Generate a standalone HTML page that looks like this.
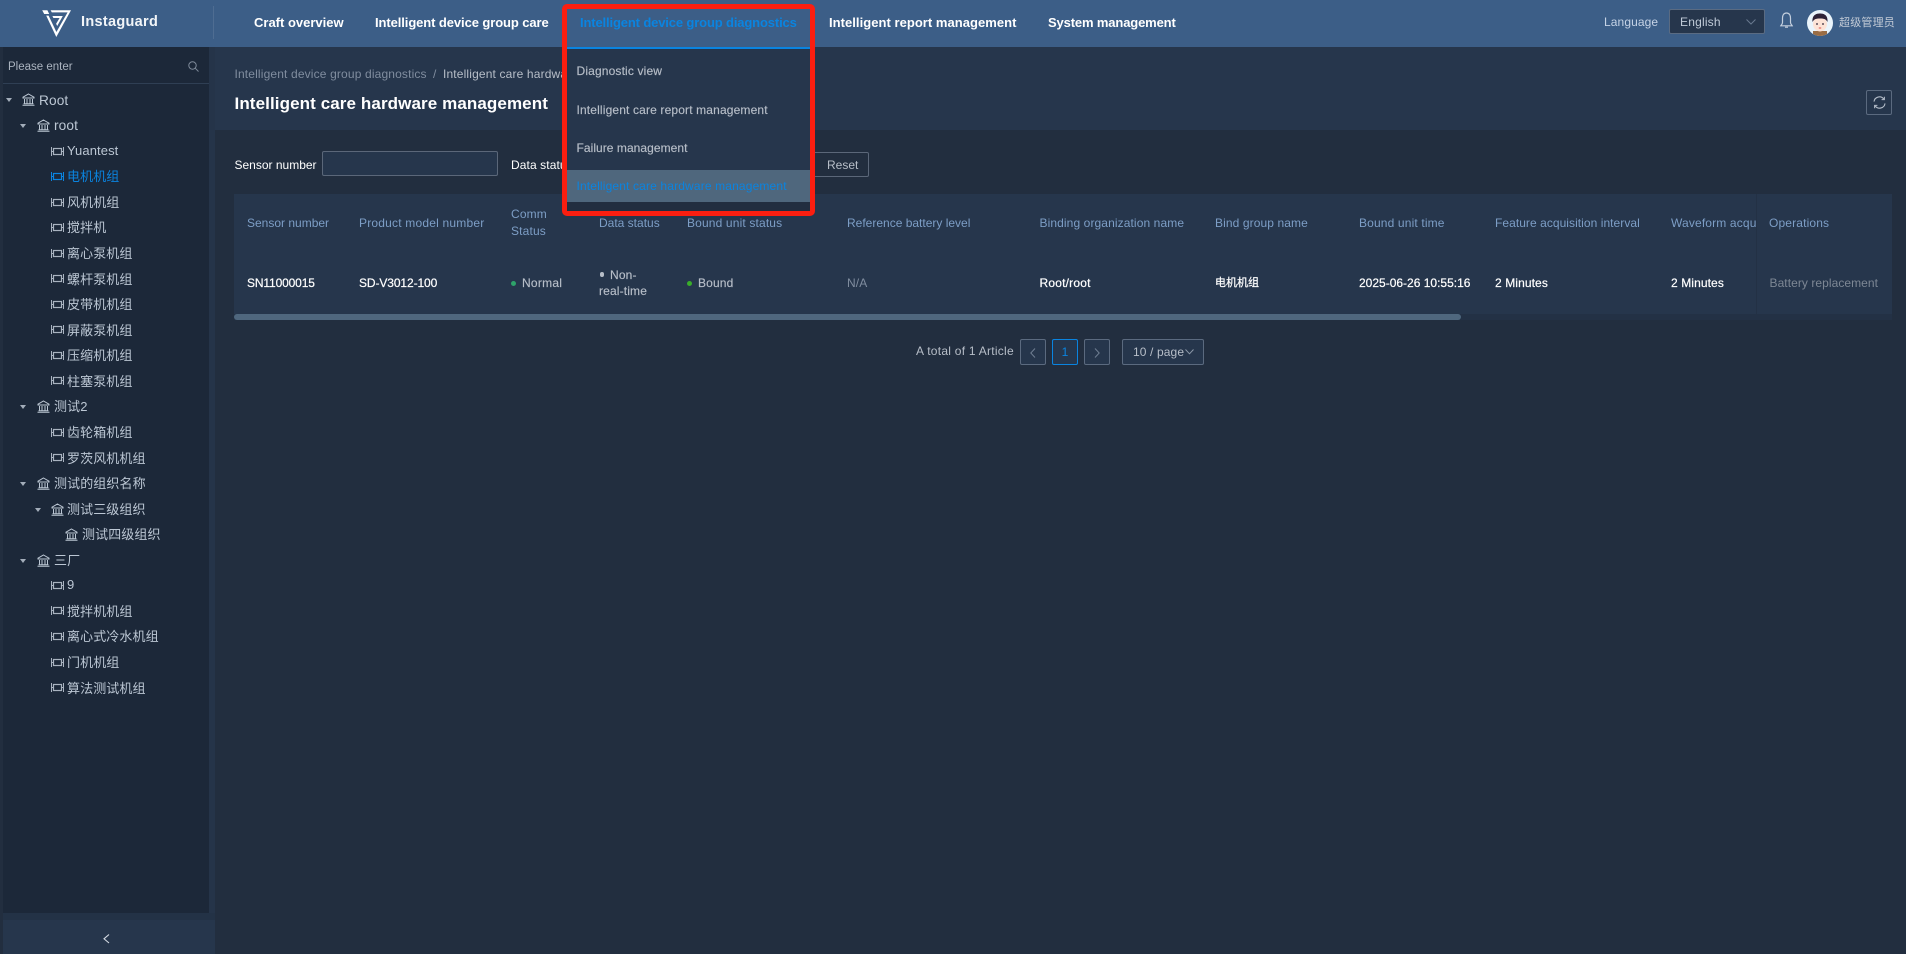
<!DOCTYPE html>
<html lang="en"><head><meta charset="utf-8"><title>Instaguard</title>
<style>
html,body{margin:0;padding:0;width:1906px;height:954px;overflow:hidden;background:#222e3f}
body{position:relative;font-family:"Liberation Sans","Noto Sans CJK SC",sans-serif;font-size:12px;color:#fff}
.b{position:absolute;box-sizing:border-box}
.t{position:absolute;white-space:nowrap;line-height:20px;height:20px}
.n{font-weight:700;font-size:13px;color:#fff}
.th{color:#7d9ec6}
.td{color:#fff;letter-spacing:.1px;-webkit-text-stroke:.2px #fff}
.tr{font-size:13px;color:#bcc7d4;letter-spacing:.1px}
.m{font-size:12px;color:#b7bec8;letter-spacing:.15px;-webkit-text-stroke:.15px currentColor}
svg{position:absolute;overflow:visible}
</style></head><body>
<svg width="0" height="0" style="position:absolute"><defs>
<symbol id="bank" viewBox="0 0 13 13" overflow="visible"><path d="M6.5 1 L12 4.2 V5 H1 V4.2 Z M2.5 6V10.5 M5 6V10.5 M8 6V10.5 M10.5 6V10.5 M1.5 10.7H11.5 M.5 12.3H12.5" fill="none" stroke="currentColor" stroke-width="1"/></symbol>
<symbol id="dev" viewBox="0 0 13 9" overflow="visible"><path d="M.5 0V9 M12.5 0V9 M.5 4.5H2.5 M10.5 4.5H12.5" fill="none" stroke="currentColor" stroke-width="1"/><rect x="2.5" y="1.5" width="8" height="6" fill="none" stroke="currentColor" stroke-width="1.2"/></symbol>
<symbol id="car" viewBox="0 0 6 4"><path d="M0 0H6L3 4Z" fill="#a3adba"/></symbol>
</defs></svg>

<!-- header -->
<div class="b" style="left:0;top:0;width:1906px;height:47px;background:#3c5e87"></div>
<svg style="left:42px;top:10px" width="29" height="27" viewBox="0 0 29 27"><path d="M4.2 5.6 L6.6 5.6 L14.4 22 L25.6 2.4 H9.8 L8.6 .3 H29 L14.3 27 Z" fill="#fff"/><path d="M.2 .3 H5.4 L7.2 4 H2.2 Z" fill="#fff"/><path d="M10.4 6 H20.8 L15.2 16 L14.1 13.8 L17.6 8 H11.4 Z" fill="#fff"/></svg>
<div class="t" style="left:81px;top:12px;font-weight:700;font-size:14.5px;color:#f2f5f8;letter-spacing:.3px">Instaguard</div>
<div class="b" style="left:213px;top:6px;width:1px;height:33px;background:#4f6d92"></div>
<div class="t n" style="left:254px;top:13px">Craft overview</div>
<div class="t n" style="left:375px;top:13px;letter-spacing:-.09px">Intelligent device group care</div>
<div class="t n" style="left:580px;top:13px;color:#0a84e0;letter-spacing:-.14px">Intelligent device group diagnostics</div>
<div class="t n" style="left:829px;top:13px;letter-spacing:.04px">Intelligent report management</div>
<div class="t n" style="left:1048px;top:13px;letter-spacing:-.14px">System management</div>
<div class="t" style="left:1604px;top:12px;color:#c6d3e6;letter-spacing:.1px">Language</div>
<div class="b" style="left:1669px;top:9px;width:96px;height:25px;background:#26364c;border:1px solid #5a6b82;border-radius:2px"></div>
<div class="t" style="left:1680px;top:12px;color:#c0cbd8;letter-spacing:.2px">English</div>
<svg style="left:1746px;top:19px" width="10" height="6"><path d="M.5 .5 L5 5 L9.5 .5" fill="none" stroke="#68798f" stroke-width="1"/></svg>
<svg style="left:1780px;top:12px" width="13" height="17" viewBox="0 0 13 17"><path d="M6.5 1 C3.5 1 2.5 3.5 2.5 6 V10.5 C2.5 12 1.2 13 .8 13.8 H12.2 C11.8 13 10.5 12 10.5 10.5 V6 C10.5 3.5 9.5 1 6.5 1 Z M5 15.2 H8" fill="none" stroke="#c3cfde" stroke-width="1.2"/></svg>
<svg style="left:1807px;top:10px" width="26" height="26" viewBox="0 0 26 26"><clipPath id="av"><circle cx="13" cy="13" r="13"/></clipPath><g clip-path="url(#av)"><rect width="26" height="26" fill="#eaf4fb"/><rect x="6" y="21" width="14" height="5" fill="#9a6d45"/><ellipse cx="13" cy="14" rx="7" ry="7.5" fill="#fde3d6"/><path d="M5.5 12 C5 5 9 3.5 13 3.5 C17 3.5 21 5 20.5 12 C19 9 17 8.5 13 8.5 C9 8.5 7 9 5.5 12Z" fill="#2e2236"/><circle cx="10" cy="14" r=".9" fill="#2e2236"/><circle cx="16" cy="14" r=".9" fill="#2e2236"/><path d="M11.8 18H14.2" stroke="#d9534f"/></g></svg>
<div class="t" style="left:1839px;top:13px;font-size:11px;color:#c3cbd6;letter-spacing:.2px">超级管理员</div>

<!-- sidebar -->
<div class="b" style="left:3px;top:47px;width:206px;height:866px;background:#1c2839"></div>
<div class="b" style="left:209px;top:47px;width:6px;height:873px;background:#253449"></div>
<div class="b" style="left:3px;top:83px;width:206px;height:1px;background:#2f3f54"></div>
<div class="t" style="left:8px;top:57px;color:#aab3bf;font-size:11.5px">Please enter</div>
<svg style="left:188px;top:61px" width="11" height="11"><circle cx="4.5" cy="4.5" r="3.7" fill="none" stroke="#7e8a99"/><path d="M7.3 7.3L10.5 10.5" stroke="#7e8a99"/></svg>
<div class="b" style="left:3px;top:913px;width:212px;height:7px;background:#233246"></div>
<div class="b" style="left:3px;top:920px;width:212px;height:34px;background:#26364c"></div>
<svg style="left:103px;top:934px" width="7" height="10"><path d="M6 .5 L1 4.8 L6 9" fill="none" stroke="#d5dbe3" stroke-width="1.1"/></svg>

<!-- tree -->
<svg style="left:6px;top:98px;color:#bcc7d4" width="6" height="4"><use href="#car"/></svg><svg style="left:22px;top:93px;color:#bcc7d4" width="13" height="13"><use href="#bank"/></svg><div class="t tr" style="left:39px;top:91px;font-size:13.7px">Root</div>
<svg style="left:20px;top:124px" width="6" height="4"><use href="#car"/></svg><svg style="left:37px;top:119px;color:#bcc7d4" width="13" height="13"><use href="#bank"/></svg><div class="t tr" style="left:54px;top:116px;font-size:13.7px">root</div>
<svg style="left:51px;top:147px;color:#a9b3c0" width="13" height="9"><use href="#dev"/></svg><div class="t tr" style="left:67px;top:141px">Yuantest</div>
<svg style="left:51px;top:172px;color:#0a84e0" width="13" height="9"><use href="#dev"/></svg><div class="t tr" style="left:67px;top:167px;color:#0a84e0">电机机组</div>
<svg style="left:51px;top:198px;color:#a9b3c0" width="13" height="9"><use href="#dev"/></svg><div class="t tr" style="left:67px;top:193px">风机机组</div>
<svg style="left:51px;top:223px;color:#a9b3c0" width="13" height="9"><use href="#dev"/></svg><div class="t tr" style="left:67px;top:218px">搅拌机</div>
<svg style="left:51px;top:249px;color:#a9b3c0" width="13" height="9"><use href="#dev"/></svg><div class="t tr" style="left:67px;top:244px">离心泵机组</div>
<svg style="left:51px;top:274px;color:#a9b3c0" width="13" height="9"><use href="#dev"/></svg><div class="t tr" style="left:67px;top:270px">螺杆泵机组</div>
<svg style="left:51px;top:300px;color:#a9b3c0" width="13" height="9"><use href="#dev"/></svg><div class="t tr" style="left:67px;top:295px">皮带机机组</div>
<svg style="left:51px;top:325px;color:#a9b3c0" width="13" height="9"><use href="#dev"/></svg><div class="t tr" style="left:67px;top:321px">屏蔽泵机组</div>
<svg style="left:51px;top:351px;color:#a9b3c0" width="13" height="9"><use href="#dev"/></svg><div class="t tr" style="left:67px;top:346px">压缩机机组</div>
<svg style="left:51px;top:376px;color:#a9b3c0" width="13" height="9"><use href="#dev"/></svg><div class="t tr" style="left:67px;top:372px">柱塞泵机组</div>
<svg style="left:20px;top:405px" width="6" height="4"><use href="#car"/></svg><svg style="left:37px;top:400px;color:#bcc7d4" width="13" height="13"><use href="#bank"/></svg><div class="t tr" style="left:54px;top:397px">测试2</div>
<svg style="left:51px;top:428px;color:#a9b3c0" width="13" height="9"><use href="#dev"/></svg><div class="t tr" style="left:67px;top:423px">齿轮箱机组</div>
<svg style="left:51px;top:453px;color:#a9b3c0" width="13" height="9"><use href="#dev"/></svg><div class="t tr" style="left:67px;top:449px">罗茨风机机组</div>
<svg style="left:20px;top:482px" width="6" height="4"><use href="#car"/></svg><svg style="left:37px;top:477px;color:#bcc7d4" width="13" height="13"><use href="#bank"/></svg><div class="t tr" style="left:54px;top:474px">测试的组织名称</div>
<svg style="left:35px;top:508px" width="6" height="4"><use href="#car"/></svg><svg style="left:51px;top:503px;color:#bcc7d4" width="13" height="13"><use href="#bank"/></svg><div class="t tr" style="left:67px;top:500px">测试三级组织</div>
<svg style="left:65px;top:528px;color:#bcc7d4" width="13" height="13"><use href="#bank"/></svg><div class="t tr" style="left:82px;top:525px">测试四级组织</div>
<svg style="left:20px;top:559px" width="6" height="4"><use href="#car"/></svg><svg style="left:37px;top:554px;color:#bcc7d4" width="13" height="13"><use href="#bank"/></svg><div class="t tr" style="left:54px;top:551px">三厂</div>
<svg style="left:51px;top:581px;color:#a9b3c0" width="13" height="9"><use href="#dev"/></svg><div class="t tr" style="left:67px;top:575px">9</div>
<svg style="left:51px;top:606px;color:#a9b3c0" width="13" height="9"><use href="#dev"/></svg><div class="t tr" style="left:67px;top:602px">搅拌机机组</div>
<svg style="left:51px;top:632px;color:#a9b3c0" width="13" height="9"><use href="#dev"/></svg><div class="t tr" style="left:67px;top:627px">离心式冷水机组</div>
<svg style="left:51px;top:658px;color:#a9b3c0" width="13" height="9"><use href="#dev"/></svg><div class="t tr" style="left:67px;top:653px">门机机组</div>
<svg style="left:51px;top:683px;color:#a9b3c0" width="13" height="9"><use href="#dev"/></svg><div class="t tr" style="left:67px;top:679px">算法测试机组</div>

<!-- page head -->
<div class="b" style="left:215px;top:47px;width:1691px;height:83px;background:#26364c"></div>
<div class="t" style="left:234.5px;top:64px;color:#808d9f;letter-spacing:.15px">Intelligent device group diagnostics</div>
<div class="t" style="left:433px;top:64px;color:#808d9f">/</div>
<div class="t" style="left:443px;top:64px;color:#b7bec8;letter-spacing:.15px">Intelligent care hardware management</div>
<div class="t" style="left:234.5px;top:94px;font-weight:700;font-size:17px;color:#fff;letter-spacing:.1px">Intelligent care hardware management</div>
<div class="b" style="left:1866px;top:90px;width:26px;height:25px;border:1px solid #5b6a7f;border-radius:2px"></div>
<svg style="left:1873px;top:96px" width="13" height="13" viewBox="0 0 13 13"><path d="M1 5.6 A5.5 5.5 0 0 1 10.8 3 M12 7.4 A5.5 5.5 0 0 1 2.2 10" fill="none" stroke="#b4bdc9" stroke-width="1.1"/><path d="M11.4 .8V3.6H8.6 M1.6 12.2V9.4H4.4" fill="none" stroke="#b4bdc9" stroke-width="1"/></svg>

<!-- filter -->
<div class="t" style="left:234.5px;top:155px;color:#fff">Sensor number</div>
<div class="b" style="left:322px;top:151px;width:176px;height:25px;background:#26364c;border:1px solid #5b6779;border-radius:2px"></div>
<div class="t" style="left:511px;top:155px;color:#fff;letter-spacing:.1px">Data status</div>
<div class="b" style="left:800px;top:152px;width:69px;height:25px;border:1px solid #5b6779;border-radius:2px"></div>
<div class="t" style="left:827px;top:155px;color:#b7bec8">Reset</div>

<!-- table -->
<div class="b" style="left:234px;top:194px;width:1658px;height:120px;background:#26364c"></div>
<div class="t th" style="left:247px;top:213px">Sensor number</div>
<div class="t th" style="left:359px;top:213px;letter-spacing:.2px">Product model number</div>
<div class="t th" style="left:511px;top:204px;letter-spacing:.15px">Comm</div>
<div class="t th" style="left:511px;top:221px;letter-spacing:.15px">Status</div>
<div class="t th" style="left:599px;top:213px">Data status</div>
<div class="t th" style="left:687px;top:213px;letter-spacing:.15px">Bound unit status</div>
<div class="t th" style="left:847px;top:213px">Reference battery level</div>
<div class="t th" style="left:1039.5px;top:213px;letter-spacing:.1px">Binding organization name</div>
<div class="t th" style="left:1215px;top:213px;letter-spacing:.1px">Bind group name</div>
<div class="t th" style="left:1359px;top:213px;letter-spacing:.15px">Bound unit time</div>
<div class="t th" style="left:1495px;top:213px;letter-spacing:.05px">Feature acquisition interval</div>
<div class="t th" style="left:1671px;top:213px;letter-spacing:.15px">Waveform acquisition interval</div>
<div class="t td" style="left:247px;top:273px;letter-spacing:-.14px">SN11000015</div>
<div class="t td" style="left:359px;top:273px;letter-spacing:-.1px">SD-V3012-100</div>
<div class="b" style="left:511px;top:281px;width:5px;height:5px;border-radius:50%;background:#2ea36a"></div>
<div class="t m" style="left:522px;top:273px;letter-spacing:.25px">Normal</div>
<div class="b" style="left:599.5px;top:272px;width:4.5px;height:4.5px;border-radius:50%;background:#b7bec8"></div>
<div class="t m" style="left:610px;top:265px">Non-</div>
<div class="t m" style="left:599px;top:281px">real-time</div>
<div class="b" style="left:687px;top:281px;width:5px;height:5px;border-radius:50%;background:#3aae2a"></div>
<div class="t m" style="left:698px;top:273px">Bound</div>
<div class="t" style="left:847px;top:273px;color:#808d9f;letter-spacing:.1px">N/A</div>
<div class="t td" style="left:1039.5px;top:273px;letter-spacing:.2px">Root/root</div>
<div class="t td" style="left:1215px;top:273px;font-size:11px;letter-spacing:0">电机机组</div>
<div class="t td" style="left:1359px;top:273px;letter-spacing:0">2025-06-26 10:55:16</div>
<div class="t td" style="left:1495px;top:273px">2 Minutes</div>
<div class="t td" style="left:1671px;top:273px">2 Minutes</div>
<div class="b" style="left:1756px;top:194px;width:136px;height:120px;background:#26364c;border-left:1px solid #233145"></div>
<div class="t th" style="left:1769px;top:213px;letter-spacing:.15px">Operations</div>
<div class="t" style="left:1769.5px;top:273px;color:#7d8794;letter-spacing:.06px">Battery replacement</div>
<div class="b" style="left:234px;top:314px;width:1658px;height:6px;background:#233145"></div>
<div class="b" style="left:234px;top:314px;width:1227px;height:6px;background:#4f677e;border-radius:3px"></div>

<!-- pagination -->
<div class="t" style="left:916px;top:341px;color:#b7bec8;letter-spacing:.26px">A total of 1 Article</div>
<div class="b" style="left:1020px;top:339px;width:26px;height:26px;background:#26364c;border:1px solid #5b6a7f;border-radius:2px"></div>
<svg style="left:1030px;top:348px" width="6" height="10"><path d="M5 .5 L.8 5 L5 9.5" fill="none" stroke="#6f7e92"/></svg>
<div class="b" style="left:1052px;top:339px;width:26px;height:26px;background:#26364c;border:1px solid #0a84e0;border-radius:2px;text-align:center;line-height:24px;color:#0a84e0">1</div>
<div class="b" style="left:1084px;top:339px;width:26px;height:26px;background:#26364c;border:1px solid #5b6a7f;border-radius:2px"></div>
<svg style="left:1094px;top:348px" width="6" height="10"><path d="M1 .5 L5.2 5 L1 9.5" fill="none" stroke="#6f7e92"/></svg>
<div class="b" style="left:1122px;top:339px;width:82px;height:26px;background:#26364c;border:1px solid #5b6a7f;border-radius:2px"></div>
<div class="t" style="left:1133px;top:342px;color:#b7bec8;letter-spacing:.12px">10 / page</div>
<svg style="left:1185px;top:349px" width="9" height="6"><path d="M.5 .5L4.5 4.8L8.5 .5" fill="none" stroke="#8c98a8"/></svg>

<!-- dropdown -->
<div class="b" style="left:567px;top:47px;width:243px;height:2px;background:#0a84e0"></div>
<div class="b" style="left:567px;top:49px;width:243px;height:153px;background:#26364c"></div>
<div class="b" style="left:567px;top:170px;width:243px;height:32px;background:#4f677d"></div>
<div class="b" style="left:567px;top:202px;width:243px;height:9px;background:#222e40"></div>
<div class="t m" style="left:576.5px;top:61px">Diagnostic view</div>
<div class="t m" style="left:576.5px;top:100px">Intelligent care report management</div>
<div class="t m" style="left:576.5px;top:138px;letter-spacing:.05px">Failure management</div>
<div class="t m" style="left:576.5px;top:176px;color:#0a84e0;-webkit-text-stroke:0">Intelligent care hardware management</div>
<div class="b" style="left:562px;top:4px;width:253px;height:212px;border:5px solid #fb1e10;border-radius:5px"></div>
</body></html>
